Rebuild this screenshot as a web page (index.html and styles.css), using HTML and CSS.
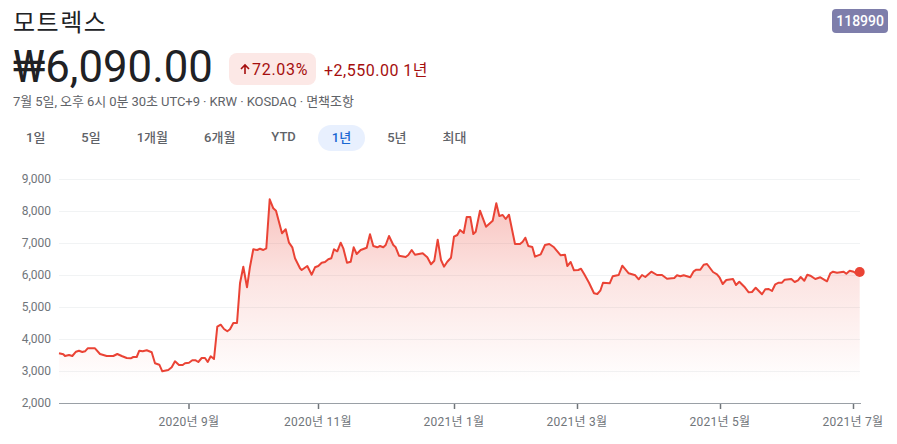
FILE: index.html
```html
<!DOCTYPE html>
<html lang="ko">
<head>
<meta charset="utf-8">
<title>모트렉스</title>
<link rel="stylesheet" href="styles.css">
</head>
<body>
<header class="head">
  <h1 class="name">모트렉스</h1>
  <span class="ticker">118990</span>
</header>
<div class="quote">
  <span class="price">₩6,090.00</span>
  <span class="pill">
    <svg class="arrow" viewBox="0 0 12 12" width="12" height="12"><path d="M6 11V2.2M2 6l4-4 4 4" fill="none" stroke="currentColor" stroke-width="1.6"/></svg>72.03%
  </span>
  <span class="delta">+2,550.00 1년</span>
</div>
<p class="meta">7월 5일, 오후 6시 0분 30초 UTC+9 · KRW · KOSDAQ · 면책조항</p>
<nav class="tabs">
  <span class="tab">1일</span>
  <span class="tab">5일</span>
  <span class="tab">1개월</span>
  <span class="tab">6개월</span>
  <span class="tab ytd">YTD</span>
  <span class="tab active">1년</span>
  <span class="tab">5년</span>
  <span class="tab">최대</span>
</nav>
<svg class="chart" viewBox="0 170 897 274" width="897" height="274">
  <defs>
    <linearGradient id="fade" gradientUnits="userSpaceOnUse" x1="0" y1="199" x2="0" y2="403">
      <stop offset="0" stop-color="#ea4335" stop-opacity="0.32"/>
      <stop offset="0.4" stop-color="#ea4335" stop-opacity="0.14"/>
      <stop offset="0.9" stop-color="#ea4335" stop-opacity="0"/>
    </linearGradient>
  </defs>
  <g class="grid">
    <line x1="59" x2="860" y1="179.5" y2="179.5"/>
    <line x1="59" x2="860" y1="211.5" y2="211.5"/>
    <line x1="59" x2="860" y1="243.5" y2="243.5"/>
    <line x1="59" x2="860" y1="275.5" y2="275.5"/>
    <line x1="59" x2="860" y1="307.5" y2="307.5"/>
    <line x1="59" x2="860" y1="339.5" y2="339.5"/>
    <line x1="59" x2="860" y1="371.5" y2="371.5"/>
  </g>
  <path class="area" d="M59 353.3 L63.3 354.3 65 356 69 355 72.3 356 76 351.7 79 350.7 82.3 352 85 351.3 87.7 348.3 95 348.3 100 354 106.7 356 113.3 356 117.3 354 121.7 356 126.7 358 130.7 358.3 133.3 357 136.7 357 139.3 350.7 142.7 351.3 146.7 350.3 151.7 352.3 155 363.3 159.3 364.7 162.3 371.3 168.3 370 171.7 367.3 175 361.3 179 365 182.7 365 185 363.3 189 362.7 192.3 360.3 195.7 360.3 198.3 362 201.7 358 205 358 207.7 362 210.7 356.3 214 359 217.3 326.7 220.7 324.7 224 329 227.3 331.3 230 329.3 233.3 323 237 323 240 283.3 243.3 266.7 247 287.3 250 266.7 253.3 249.3 257.3 250 260 248.7 263.3 250 266.3 248.3 269.7 199.3 273.3 208.3 276 210.7 282 233.3 285.7 229.3 289 242.7 292.3 247.3 295 258.3 300 268.3 301.7 270 307.3 266 311.7 274.7 315 267.3 318.3 266 321.7 262.7 325 262 328.3 259.3 331.3 258.3 334 249.3 337.3 251.3 340.7 242.7 343.3 248.3 347 262.7 350.7 261.7 353.7 247.3 356.7 254 360.7 250 366.7 247.7 370 234.3 373.3 246 377.3 247.3 380 246 383.3 247.3 385.7 245 389 236 393.3 245 395.7 247.3 399 255.7 405.7 257 408.3 255 411.7 250 415 254.7 422.7 253.3 427.3 257.3 431 264.3 434.3 260.7 437.7 239.7 441 260 444 266.7 447.3 261.7 451 257.7 454 236.7 457.3 235 460 230 463.7 233 466.7 217 470.3 217 473.3 234 475.7 231.7 480 210.7 486 226.7 492.7 220.7 496.3 203.3 499.3 216 502.7 215 505.7 219 509 214.7 515 244 520 244 522.7 241.7 525.3 237.7 528.3 246 532.3 247 535 256.7 540.7 254.3 545 245 549.3 244 554 247.3 560.7 255.3 565 254.7 567.3 266 570.7 262 574 270.3 578.3 270 581 268.7 584.3 274.3 589 282.7 594 293.3 597.3 294 600.3 290.7 603 282.7 609.7 283.3 612.7 276.3 618.7 275 622.3 265.7 628.7 273.3 635.3 275.3 638.7 279.3 642 275 645.3 277 651.3 271.7 657 275 662 275 667 278.7 674.3 278 677 275.3 680.3 276.3 683.7 275.3 690.3 277.3 693.7 271.3 696.3 269.7 700.3 269.7 703.7 264.7 707 264 713 272 717 274.3 719.7 277.7 722.7 284 726.3 280 733 279 736 285 739.3 281.7 744.3 286.7 748.7 292.3 752 292 755.7 287.7 762 294.3 765.3 289.3 768.7 289 772 291 775.3 284.3 778.7 282.7 782 282.7 784.7 279.7 791.3 279 794.7 282 798 280.3 800.7 277 804.3 280.7 807.3 274.7 810.3 275.7 815.3 279 820.3 277.3 827 281.3 830.3 273.3 833 271.7 837 272.7 843.7 271.7 846.3 273.7 849.7 270.7 853.7 271.7 856.3 273.7 859.7 272 L859.7 403 59 403Z"/>
  <path class="line" d="M59 353.3 L63.3 354.3 65 356 69 355 72.3 356 76 351.7 79 350.7 82.3 352 85 351.3 87.7 348.3 95 348.3 100 354 106.7 356 113.3 356 117.3 354 121.7 356 126.7 358 130.7 358.3 133.3 357 136.7 357 139.3 350.7 142.7 351.3 146.7 350.3 151.7 352.3 155 363.3 159.3 364.7 162.3 371.3 168.3 370 171.7 367.3 175 361.3 179 365 182.7 365 185 363.3 189 362.7 192.3 360.3 195.7 360.3 198.3 362 201.7 358 205 358 207.7 362 210.7 356.3 214 359 217.3 326.7 220.7 324.7 224 329 227.3 331.3 230 329.3 233.3 323 237 323 240 283.3 243.3 266.7 247 287.3 250 266.7 253.3 249.3 257.3 250 260 248.7 263.3 250 266.3 248.3 269.7 199.3 273.3 208.3 276 210.7 282 233.3 285.7 229.3 289 242.7 292.3 247.3 295 258.3 300 268.3 301.7 270 307.3 266 311.7 274.7 315 267.3 318.3 266 321.7 262.7 325 262 328.3 259.3 331.3 258.3 334 249.3 337.3 251.3 340.7 242.7 343.3 248.3 347 262.7 350.7 261.7 353.7 247.3 356.7 254 360.7 250 366.7 247.7 370 234.3 373.3 246 377.3 247.3 380 246 383.3 247.3 385.7 245 389 236 393.3 245 395.7 247.3 399 255.7 405.7 257 408.3 255 411.7 250 415 254.7 422.7 253.3 427.3 257.3 431 264.3 434.3 260.7 437.7 239.7 441 260 444 266.7 447.3 261.7 451 257.7 454 236.7 457.3 235 460 230 463.7 233 466.7 217 470.3 217 473.3 234 475.7 231.7 480 210.7 486 226.7 492.7 220.7 496.3 203.3 499.3 216 502.7 215 505.7 219 509 214.7 515 244 520 244 522.7 241.7 525.3 237.7 528.3 246 532.3 247 535 256.7 540.7 254.3 545 245 549.3 244 554 247.3 560.7 255.3 565 254.7 567.3 266 570.7 262 574 270.3 578.3 270 581 268.7 584.3 274.3 589 282.7 594 293.3 597.3 294 600.3 290.7 603 282.7 609.7 283.3 612.7 276.3 618.7 275 622.3 265.7 628.7 273.3 635.3 275.3 638.7 279.3 642 275 645.3 277 651.3 271.7 657 275 662 275 667 278.7 674.3 278 677 275.3 680.3 276.3 683.7 275.3 690.3 277.3 693.7 271.3 696.3 269.7 700.3 269.7 703.7 264.7 707 264 713 272 717 274.3 719.7 277.7 722.7 284 726.3 280 733 279 736 285 739.3 281.7 744.3 286.7 748.7 292.3 752 292 755.7 287.7 762 294.3 765.3 289.3 768.7 289 772 291 775.3 284.3 778.7 282.7 782 282.7 784.7 279.7 791.3 279 794.7 282 798 280.3 800.7 277 804.3 280.7 807.3 274.7 810.3 275.7 815.3 279 820.3 277.3 827 281.3 830.3 273.3 833 271.7 837 272.7 843.7 271.7 846.3 273.7 849.7 270.7 853.7 271.7 856.3 273.7 859.7 272"/>
  <circle class="dot" cx="859.7" cy="272" r="5"/>
  <line class="axis" x1="59" x2="861" y1="403.5" y2="403.5"/>
  <g class="ticks">
    <line x1="189" x2="189" y1="404" y2="409"/>
    <line x1="318.5" x2="318.5" y1="404" y2="409"/>
    <line x1="454.5" x2="454.5" y1="404" y2="409"/>
    <line x1="577.5" x2="577.5" y1="404" y2="409"/>
    <line x1="720.5" x2="720.5" y1="404" y2="409"/>
    <line x1="853.5" x2="853.5" y1="404" y2="409"/>
  </g>
  <g class="ylabels">
    <text x="51" y="183">9,000</text>
    <text x="51" y="215">8,000</text>
    <text x="51" y="247">7,000</text>
    <text x="51" y="279">6,000</text>
    <text x="51" y="311">5,000</text>
    <text x="51" y="343">4,000</text>
    <text x="51" y="375">3,000</text>
    <text x="51" y="407">2,000</text>
  </g>
  <g class="xlabels">
    <text x="189" y="426">2020년 9월</text>
    <text x="318" y="426">2020년 11월</text>
    <text x="454" y="426">2021년 1월</text>
    <text x="577" y="426">2021년 3월</text>
    <text x="720" y="426">2021년 5월</text>
    <text x="853" y="426">2021년 7월</text>
  </g>
</svg>
</body>
</html>
```
FILE: styles.css
```css
html, body {
  margin: 0;
  background: #fff;
}
body {
  width: 897px;
  height: 444px;
  overflow: hidden;
  font-family: Roboto, "Noto Sans CJK KR", sans-serif;
  color: #202124;
}
.head {
  display: flex;
  justify-content: space-between;
  align-items: flex-start;
  padding: 9px 9px 0 13px;
  height: 32px;
  box-sizing: border-box;
}
.name {
  margin: 0;
  font-size: 24px;
  font-weight: 400;
  line-height: 28px;
  letter-spacing: 1.5px;
}
.ticker {
  display: block;
  background: #7e7eab;
  color: #fff;
  font-size: 14px;
  font-weight: 500;
  line-height: 24px;
  padding: 0 4px;
  border-radius: 4px;
}
.quote {
  display: flex;
  align-items: center;
  margin-top: 13px;
  padding-left: 13px;
  height: 48px;
}
.price {
  font-size: 43.7px;
  line-height: 46px;
  width: 216px;
  margin-bottom: 4px;
  flex: none;
}
.pill {
  display: flex;
  align-items: center;
  height: 32px;
  width: 87px;
  box-sizing: border-box;
  padding-left: 10px;
  border-radius: 8px;
  background: #fce8e6;
  color: #a50e0e;
  font-size: 16px;
  font-weight: 400;
  letter-spacing: 0.7px;
  flex: none;
}
.arrow {
  margin-right: 1px;
}
.delta {
  margin-left: 8px;
  color: #a50e0e;
  font-size: 16px;
  font-weight: 400;
  letter-spacing: 0.5px;
}
.meta {
  margin: 0 0 0 13px;
  font-size: 13px;
  letter-spacing: -0.07px;
  line-height: 18px;
  color: #5f6368;
}
.tabs {
  display: flex;
  gap: 8px;
  margin: 14px 0 0 12px;
  height: 26px;
}
.tab {
  padding: 0 14px;
  border-radius: 13px;
  font-size: 13px;
  font-weight: 500;
  line-height: 26px;
  color: #5f6368;
}
.tab.ytd {
  line-height: 23px;
}
.tab.active {
  background: #e8f0fe;
  color: #1967d2;
}
.chart {
  display: block;
  margin-top: 19px;
}
.grid line {
  stroke: #f1f3f4;
  stroke-width: 1;
}
.area {
  fill: url(#fade);
}
.line {
  fill: none;
  stroke: #ea4335;
  stroke-width: 2;
  stroke-linejoin: round;
}
.dot {
  fill: #ea4335;
}
.axis {
  stroke: #9aa0a6;
  stroke-width: 1;
}
.ticks line {
  stroke: #70757a;
  stroke-width: 1.5;
}
.ylabels text {
  font-size: 12px;
  fill: #70757a;
  text-anchor: end;
}
.xlabels text {
  font-size: 12px;
  letter-spacing: 0.25px;
  fill: #70757a;
  text-anchor: middle;
}
```
